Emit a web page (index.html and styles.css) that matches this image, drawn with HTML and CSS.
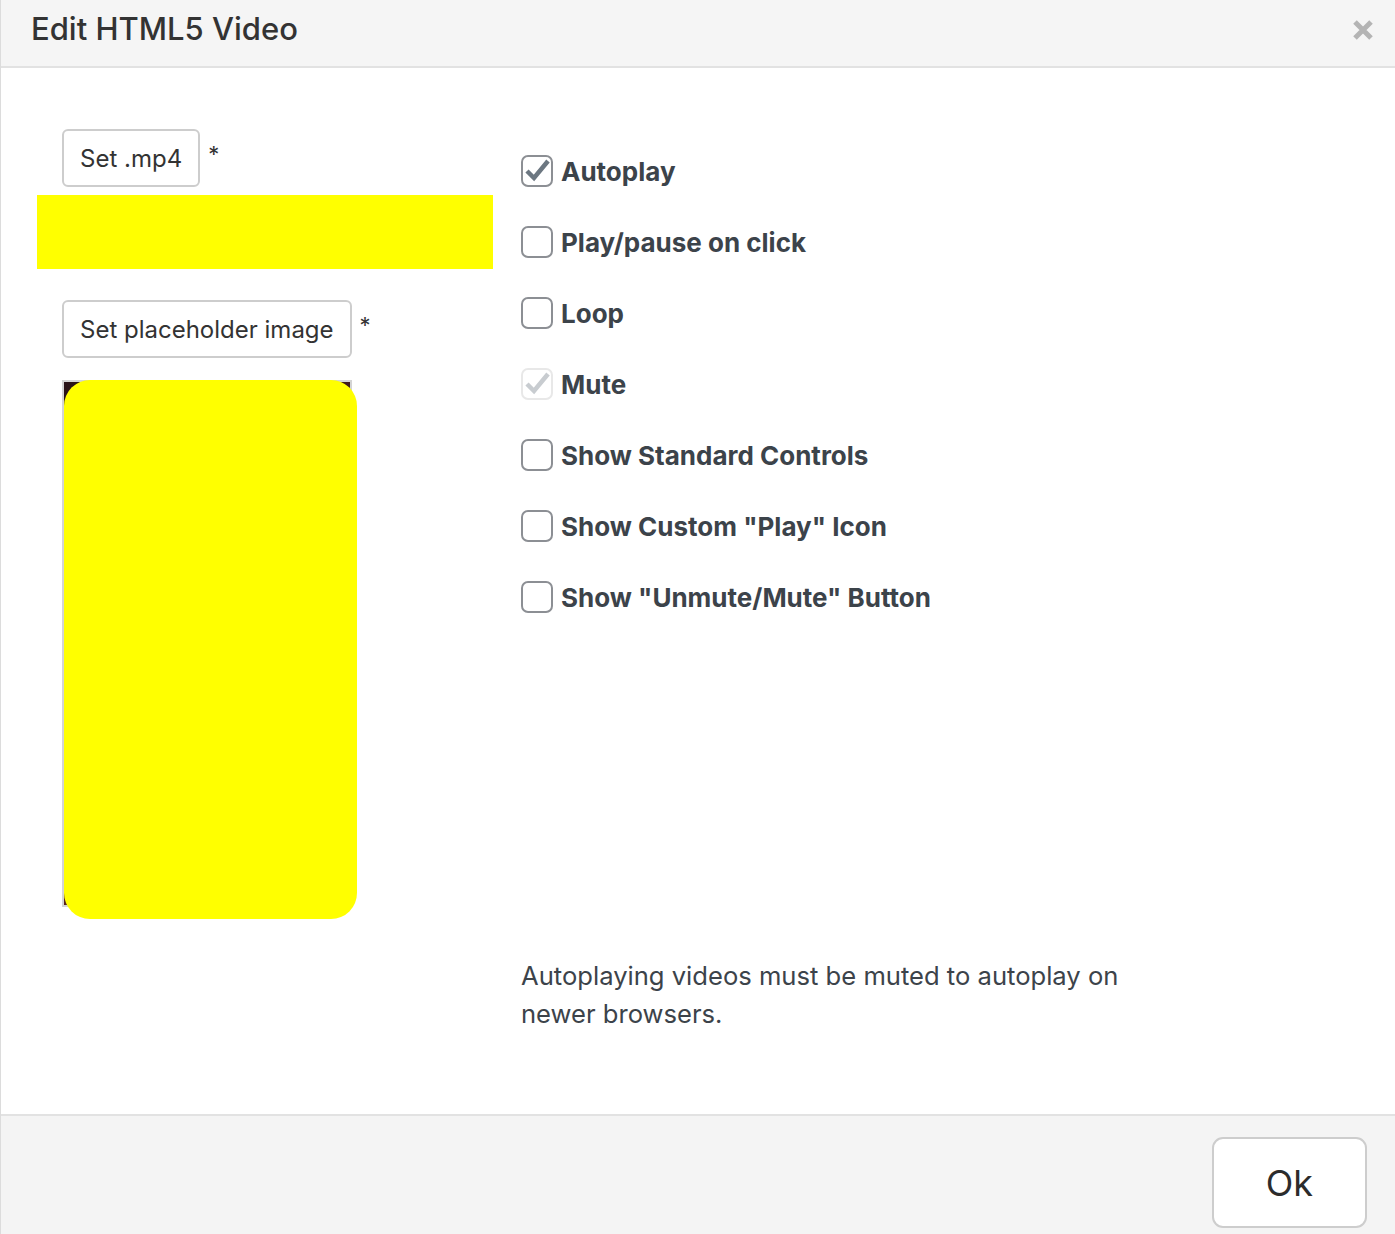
FILE: index.html
```html
<!DOCTYPE html>
<html>
<head>
<meta charset="utf-8">
<link rel="stylesheet" href="styles.css">
</head>
<body>
<div class="modal">
  <header class="head">
    <h1 class="title">Edit HTML5 Video</h1>
    <button class="close" aria-label="Close">
      <svg width="22" height="22" viewBox="0 0 22 22"><path d="M3 3 L19 19 M19 3 L3 19" stroke="#b4b4b4" stroke-width="5" stroke-linecap="butt"/></svg>
    </button>
  </header>
  <main class="body">
    <section class="left">
      <div class="setrow">
        <button class="btn">Set .mp4</button><span class="req">*</span>
      </div>
      <div class="yellowbar"></div>
      <div class="setrow second">
        <button class="btn">Set placeholder image</button><span class="req">*</span>
      </div>
      <div class="imgwrap">
        <div class="imgframe"></div>
        <div class="imgcover"></div>
      </div>
    </section>
    <section class="right">
      <ul class="opts">
        <li class="opt"><span class="cb checked"><svg viewBox="0 0 32 32" width="32" height="32"><path d="M6 16 L13 23 L27 6" fill="none" stroke="#6c7781" stroke-width="4.5"/></svg></span><span class="lbl">Autoplay</span></li>
        <li class="opt"><span class="cb"></span><span class="lbl">Play/pause on click</span></li>
        <li class="opt"><span class="cb"></span><span class="lbl">Loop</span></li>
        <li class="opt"><span class="cb disabled"><svg viewBox="0 0 32 32" width="32" height="32"><path d="M6 16 L13 23 L27 6" fill="none" stroke="#c8ccd0" stroke-width="4.5"/></svg></span><span class="lbl">Mute</span></li>
        <li class="opt"><span class="cb"></span><span class="lbl">Show Standard Controls</span></li>
        <li class="opt"><span class="cb"></span><span class="lbl">Show Custom "Play" Icon</span></li>
        <li class="opt"><span class="cb"></span><span class="lbl">Show "Unmute/Mute" Button</span></li>
      </ul>
      <p class="note">Autoplaying videos must be muted to autoplay on newer browsers.</p>
    </section>
  </main>
  <footer class="foot">
    <button class="okbtn">Ok</button>
  </footer>
</div>
</body>
</html>
```

FILE: styles.css
```css
* { box-sizing: border-box; }
html, body { margin: 0; padding: 0; }
body {
  font-family: Inter, "Liberation Sans", Arial, sans-serif;
  background: #fff;
  color: #3c434a;
}
.modal {
  width: 1395px;
  height: 1234px;
  border-left: 1px solid #dcdcdc;
  display: flex;
  flex-direction: column;
}
.head {
  height: 68px;
  background: #f5f5f5;
  border-bottom: 2px solid #e2e2e2;
  display: flex;
  align-items: center;
  justify-content: space-between;
  padding: 0 21px 0 30px;
}
.title {
  margin: 0;
  font-size: 31px;
  font-weight: 500;
  color: #333;
  padding-bottom: 10px;
}
.close {
  border: 0;
  background: none;
  padding: 0;
  width: 22px;
  height: 22px;
  margin-bottom: 6px;
}
.close svg { display: block; }
.body {
  flex: 1;
  display: flex;
  padding: 61px 0 0 36px;
}
.left {
  width: 484px;
  display: flex;
  flex-direction: column;
}
.setrow {
  display: flex;
  align-items: flex-start;
  padding-left: 25px;
}
.setrow.second { margin-top: 31px; }
.btn {
  font-family: inherit;
  font-size: 24px;
  color: #333;
  background: #fff;
  border: 2px solid #cdcdcd;
  border-radius: 6px;
  height: 58px;
  padding: 0 16px;
}
.req {
  font-size: 22px;
  color: #333;
  margin-left: 8px;
  margin-top: 12px;
}
.yellowbar {
  width: 456px;
  height: 74px;
  background: #ffff00;
  margin-top: 8px;
}
.imgwrap {
  position: relative;
  margin-top: 22px;
  margin-left: 25px;
  width: 295px;
  height: 539px;
}
.imgframe {
  position: absolute;
  left: 0; top: 0;
  width: 290px;
  height: 527px;
  border: 2px solid #d4d4d4;
  background: linear-gradient(135deg, #2a1418 0%, #4a1d20 60%, #c25a2a 100%);
}
.imgcover {
  position: absolute;
  left: 2px; top: 0;
  width: 293px;
  height: 539px;
  background: #ffff00;
  border-radius: 26px;
}
.right {
  flex: 1;
  padding-left: 0;
  display: flex;
  flex-direction: column;
}
.opts {
  list-style: none;
  margin: 0;
  padding: 0;
  margin-top: 26px;
}
.opt {
  display: flex;
  align-items: center;
  height: 32px;
  margin-bottom: 39px;
}
.cb {
  width: 32px;
  height: 32px;
  border: 2px solid #8c8f94;
  border-radius: 7px;
  background: #fff;
  flex: none;
  position: relative;
  margin-right: 8px;
}
.cb svg { position: absolute; left: -2px; top: -2px; }
.cb.disabled { border-color: #e8e8e8; }
.lbl {
  font-size: 26px;
  font-weight: 700;
  color: #3c434a;
}
.note {
  margin: 305px 0 0 0;
  width: 620px;
  font-size: 25.6px;
  line-height: 38px;
  color: #3c434a;
}
.foot {
  height: 120px;
  background: #f4f4f4;
  border-top: 2px solid #e2e2e2;
  display: flex;
  justify-content: flex-end;
  align-items: flex-start;
  padding: 21px 28px 0 0;
}
.okbtn {
  width: 155px;
  height: 91px;
  background: #fff;
  border: 2px solid #cdcdcd;
  border-radius: 11px;
  font-family: inherit;
  font-size: 36px;
  color: #2c2c2c;
}
```
